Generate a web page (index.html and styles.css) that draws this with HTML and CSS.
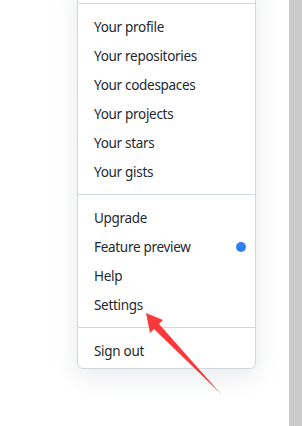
FILE: index.html
```html
<!DOCTYPE html>
<html lang="en">
<head>
  <meta charset="UTF-8">
  <meta name="viewport" content="width=device-width, initial-scale=1.0">
  <title>User Menu</title>
  <link rel="stylesheet" href="styles.css">
</head>
<body>
  <div class="page">
    <div class="main">
      <!-- Account dropdown -->
      <div class="menu">
        <div class="menu-top"></div>
        <ul class="menu-section">
          <li class="menu-item">Your profile</li>
          <li class="menu-item">Your repositories</li>
          <li class="menu-item">Your codespaces</li>
          <li class="menu-item">Your projects</li>
          <li class="menu-item">Your stars</li>
          <li class="menu-item">Your gists</li>
        </ul>
        <ul class="menu-section">
          <li class="menu-item">Upgrade</li>
          <li class="menu-item">Feature preview <span class="dot"></span></li>
          <li class="menu-item">Help</li>
          <li class="menu-item">Settings</li>
        </ul>
        <ul class="menu-section last">
          <li class="menu-item">Sign out</li>
        </ul>
      </div>

      <!-- Annotation arrow -->
      <svg class="arrow" width="302" height="426" viewBox="0 0 302 426">
        <polygon points="146,313 163,320 159,324 221,394 154,329 150,333" fill="#fa3a3a"/>
      </svg>
    </div>
    <div class="scrollbar"></div>
  </div>
</body>
</html>
```

FILE: styles.css
```css
body {
  margin: 0;
  background-color: #ffffff;
  font-family: "Noto Sans", "Open Sans", sans-serif;
  overflow: hidden;
}

.page {
  display: flex;
  height: 426px;
}

.main {
  flex: 1;
  position: relative;
}

.scrollbar {
  width: 13px;
  background-color: #cbcbcb;
}

.menu {
  width: 177px;
  margin-top: -20px;
  margin-left: 77px;
  background-color: #ffffff;
  border: 1px solid #d0d7de;
  border-radius: 6px;
  box-shadow: 0 8px 24px rgba(140, 149, 159, 0.2);
}

.menu-top {
  height: 22px;
}

.menu-section {
  list-style: none;
  margin: 0;
  padding: 8px 0;
  border-top: 1px solid #d0d7de;
}

.menu-section.last {
  padding-bottom: 3px;
}

.menu-item {
  display: flex;
  align-items: center;
  justify-content: space-between;
  height: 29px;
  padding: 0 9px 0 16px;
  font-size: 13.5px;
  letter-spacing: -0.3px;
  color: #24292f;
}

.dot {
  width: 10px;
  height: 10px;
  border-radius: 50%;
  background-color: #2f7ff7;
}

.arrow {
  position: absolute;
  top: 0;
  left: 0;
}
```
